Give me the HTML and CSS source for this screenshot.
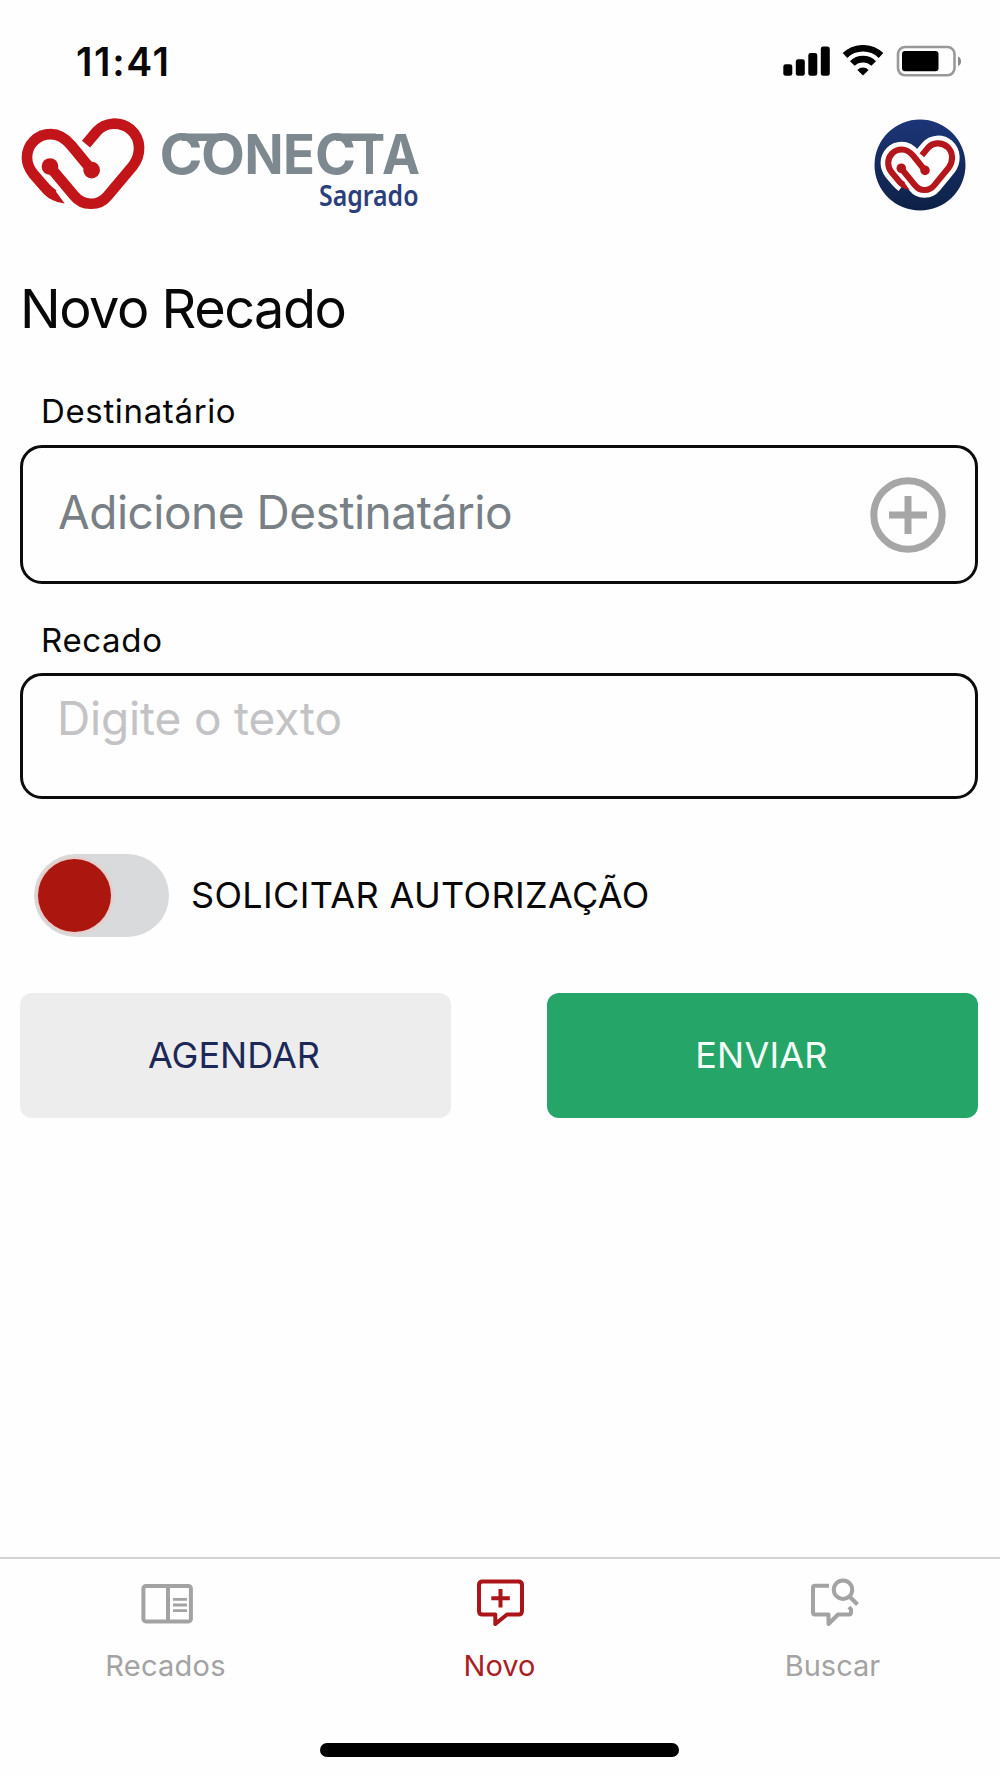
FILE: index.html
```html
<!DOCTYPE html>
<html lang="pt-BR">
<head>
<meta charset="utf-8">
<title>Conecta Sagrado</title>
<link rel="stylesheet" href="styles.css">
</head>
<body>
<div class="app">
  <div class="status">
    <span class="time">11:41</span>
    <svg class="indicators" width="182" height="32" viewBox="782 45 182 32">
      <rect x="783.3" y="64.3" width="9" height="11.5" rx="2.4"/>
      <rect x="795.8" y="59.2" width="9" height="16.6" rx="2.4"/>
      <rect x="808.3" y="53" width="9" height="22.8" rx="2.4"/>
      <rect x="820.8" y="46.6" width="9" height="29.2" rx="2.4"/>
      <g fill="none" stroke="#000" stroke-width="6.6">
        <path d="M845 55.5a26 26 0 0 1 36 0"/>
        <path d="M852.3 63.500a15.2 15.2 0 0 1 21.4 0"/>
      </g>
      <path d="M863 75.6l-5.6-5.7a8 8 0 0 1 11.2 0z"/>
      <rect x="898" y="47" width="56.5" height="28.3" rx="7" fill="none" stroke="#999" stroke-width="2.6"/>
      <rect x="902" y="51" width="36.500" height="20.3" rx="3"/>
      <path d="M958 56.500q3 1.200 3 4.800t-3 4.800z" fill="#888"/>
    </svg>
  </div>

  <header class="header">
    <svg class="logo" width="412" height="120" viewBox="0 0 412 120" role="img" aria-label="Conecta Sagrado">
      <defs>
        <g id="heart">
          <path d="M245 194L184 120C162 94 142 86 122 86C82 86 51 118 51 156C51 176 58 190 69 204L106 247Q114 256 130 268"/>
          <path d="M120 184L192 270C218 302 266 304 293 271L368 182C395 147 394 100 362 72C330 46 285 50 260 78L228 116"/>
        </g>
        <g id="heart-ends">
          <circle cx="120" cy="183" r="25"/>
          <circle cx="245" cy="194" r="25"/>
          <path d="M96 259Q122 290 164 294L136 256L112 240z"/>
        </g>
      </defs>
      <g transform="translate(0 .5) scale(.3333)">
        <use href="#heart" class="heart-line"/>
        <use href="#heart-ends" class="heart-fill"/>
      </g>
      <g class="brand-name">
        <text y="69"><tspan x="149.500" textLength="43" lengthAdjust="spacingAndGlyphs">C</tspan><tspan x="191" textLength="44" lengthAdjust="spacingAndGlyphs">O</tspan><tspan x="234.500" textLength="39" lengthAdjust="spacingAndGlyphs">N</tspan><tspan x="273" textLength="32" lengthAdjust="spacingAndGlyphs">E</tspan><tspan x="305" textLength="41" lengthAdjust="spacingAndGlyphs">C</tspan><tspan x="344" textLength="31" lengthAdjust="spacingAndGlyphs">T</tspan><tspan x="372" textLength="38" lengthAdjust="spacingAndGlyphs">A</tspan></text>
        <path d="M172 28.400h41v7.500h-41zM326 28.400h40v7.500h-40z"/>
      </g>
      <text class="brand-sub" x="309" y="100.500" textLength="99.500" lengthAdjust="spacingAndGlyphs">Sagrado</text>
    </svg>
    <svg class="avatar" width="92" height="92" viewBox="-1 -1 92 92">
      <defs>
        <linearGradient id="navy" x1="0" y1="0" x2="0" y2="1">
          <stop offset="0" stop-color="#1c3577"/>
          <stop offset="1" stop-color="#0d2146"/>
        </linearGradient>
      </defs>
      <circle cx="45" cy="45" r="45.500" fill="url(#navy)"/>
      <g transform="translate(3.500 12.800) scale(.19 .194)">
        <use href="#heart" class="heart-halo"/>
        <use href="#heart" class="heart-line"/>
        <use href="#heart-ends" class="heart-fill"/>
      </g>
    </svg>
  </header>

  <main class="content">
    <h1 class="title">Novo Recado</h1>
    <div class="label">Destinatário</div>
    <div class="field recipient">
      <span class="recipient-hint">Adicione Destinatário</span>
      <svg width="78" height="78" viewBox="0 0 78 78" fill="none" stroke="#a6a6a6">
        <circle cx="39" cy="39" r="34.200" stroke-width="7"/>
        <path d="M39 20v38M20 39h38" stroke-width="7"/>
      </svg>
    </div>
    <div class="label label-message">Recado</div>
    <div class="field message"><span class="message-hint">Digite o texto</span></div>
    <div class="authorize">
      <div class="switch"><div class="knob"></div></div>
      <span class="authorize-text">SOLICITAR AUTORIZAÇÃO</span>
    </div>
    <div class="actions">
      <div class="button schedule">AGENDAR</div>
      <div class="button send">ENVIAR</div>
    </div>
  </main>

  <nav class="tabs">
    <div class="tab">
      <svg width="60" height="56" viewBox="0 0 60 56" fill="none" stroke="#a3a3a3">
        <rect x="6.400" y="9.900" width="47.500" height="35.500" rx="2.500" stroke-width="4"/>
        <path d="M31 10v35" stroke-width="4"/>
        <path d="M36 23.300h14M36 29h14M36 34.700h14" stroke-width="2.800"/>
      </svg>
      <span class="tab-recados">Recados</span>
    </div>
    <div class="tab active">
      <svg width="60" height="56" viewBox="-1 0 60 56" fill="none" stroke="#ab1519" stroke-width="4" stroke-linejoin="round">
        <path d="M11.500 5.500H47.500Q51 5.500 51 9V35Q51 38.500 47.500 38.500H36L24.300 48V38.500H11.500Q8 38.500 8 35V9Q8 5.500 11.500 5.500z"/>
        <path d="M29.500 13v18.500M20.300 22.200h18.500"/>
      </svg>
      <span class="tab-novo">Novo</span>
    </div>
    <div class="tab">
      <svg width="60" height="56" viewBox="-1.500 0 60 56" fill="none" stroke="#a3a3a3" stroke-width="4" stroke-linejoin="round">
        <path d="M24.500 9.800H10.500Q8.500 9.800 8.500 12V36Q8.500 38.500 10.500 38.500H24V48L33.500 38.500H44.500Q46.500 38.500 46.500 36V33.500L44.500 31"/>
        <circle cx="38.500" cy="13.700" r="9.200"/>
        <path d="M45 20.500l8 8"/>
      </svg>
      <span class="tab-buscar">Buscar</span>
    </div>
  </nav>
  <div class="home"></div>
</div>
</body>
</html>
```
FILE: styles.css
```css
* { box-sizing: border-box; }
body { margin: 0; background: #fefefe; color: #080808; font-family: Inter, "Liberation Sans", sans-serif; }
.app { width: 1000px; height: 1778px; display: flex; flex-direction: column; }

.status { height: 106px; padding: 39px 36px 0 76px; display: flex; justify-content: space-between; align-items: flex-start; }
.time { font-size: 39px; line-height: 45px; font-weight: 600; letter-spacing: 1.6px; }
.indicators { margin-top: 6px; }

.header { height: 170px; padding: 0 34px 0 10px; display: flex; justify-content: space-between; align-items: flex-start; }
.avatar { margin-top: 13px; }
.logo { margin-top: -1px; overflow: visible; }
.heart-line { fill: none; stroke: #c21519; stroke-width: 32px; }
.heart-halo { fill: #fff; stroke: #fff; stroke-width: 80px; stroke-linejoin: round; }
.heart-fill { fill: #c21519; }
.avatar .heart-line { stroke: #b5161c; }
.avatar .heart-fill { fill: #b5161c; }
.brand-name { fill: #7d898f; font-family: Inter, sans-serif; font-weight: 700; font-size: 55px; }
.brand-sub { fill: #2c3f7d; font-family: "Noto Sans", sans-serif; font-weight: 600; font-size: 29px; }

.content { flex: 1; padding: 0 22px 0 20px; }
.title { margin: 0; font-size: 54px; line-height: 66px; font-weight: 400; letter-spacing: -1.45px; }
.label { margin: 49px 0 14px 21px; font-size: 33px; line-height: 40px; letter-spacing: .65px; }
.label-message { margin: 36px 0 13px 21px; }
.field { border: 3px solid #0c0c0c; border-radius: 22px; background: #fefefe; }
.recipient { height: 139px; padding: 0 28px 0 35px; display: flex; align-items: center; justify-content: space-between; }
.recipient-hint { font-size: 46px; line-height: 56px; letter-spacing: -.49px; color: #788086; margin-top: -6px; }
.message { height: 126px; padding: 12px 34px; }
.message-hint { display: block; font-size: 46px; line-height: 60px; letter-spacing: -.16px; color: #c3c3c5; }

.authorize { margin: 55px 0 0 14px; display: flex; align-items: center; gap: 22px; }
.switch { width: 135px; height: 83px; border-radius: 42px; background: #d9dadb; padding: 5px 4px; }
.knob { width: 73px; height: 73px; border-radius: 50%; background: #ab170f; box-shadow: 0 0 2px 2px #e8cbc7; }
.authorize-text { font-size: 36px; line-height: 44px; letter-spacing: .35px; margin-top: -2px; }

.actions { margin-top: 56px; display: flex; justify-content: space-between; }
.button { width: 431px; height: 125px; border-radius: 12px; font-size: 36px; line-height: 124px; text-align: center; }
.schedule { background: #ededed; color: #1c2858; padding-right: 3px; }
.send { background: #25a567; color: #f4fff8; letter-spacing: .2px; padding-right: 2px; }

.tabs { height: 150px; border-top: 2px solid #d4d4d4; display: flex; justify-content: space-between; padding: 17px 1px 0 0; }
.tab { width: 333px; display: flex; flex-direction: column; align-items: center; color: #a3a3a3; font-size: 29px; line-height: 36px; gap: 16px; }
.active { color: #ab1d24; }
.tab-recados { letter-spacing: .26px; margin-left: -2px; }

.home { width: 359px; height: 14px; border-radius: 7px; background: #000; margin: 36px auto 21px 320px; }
```
